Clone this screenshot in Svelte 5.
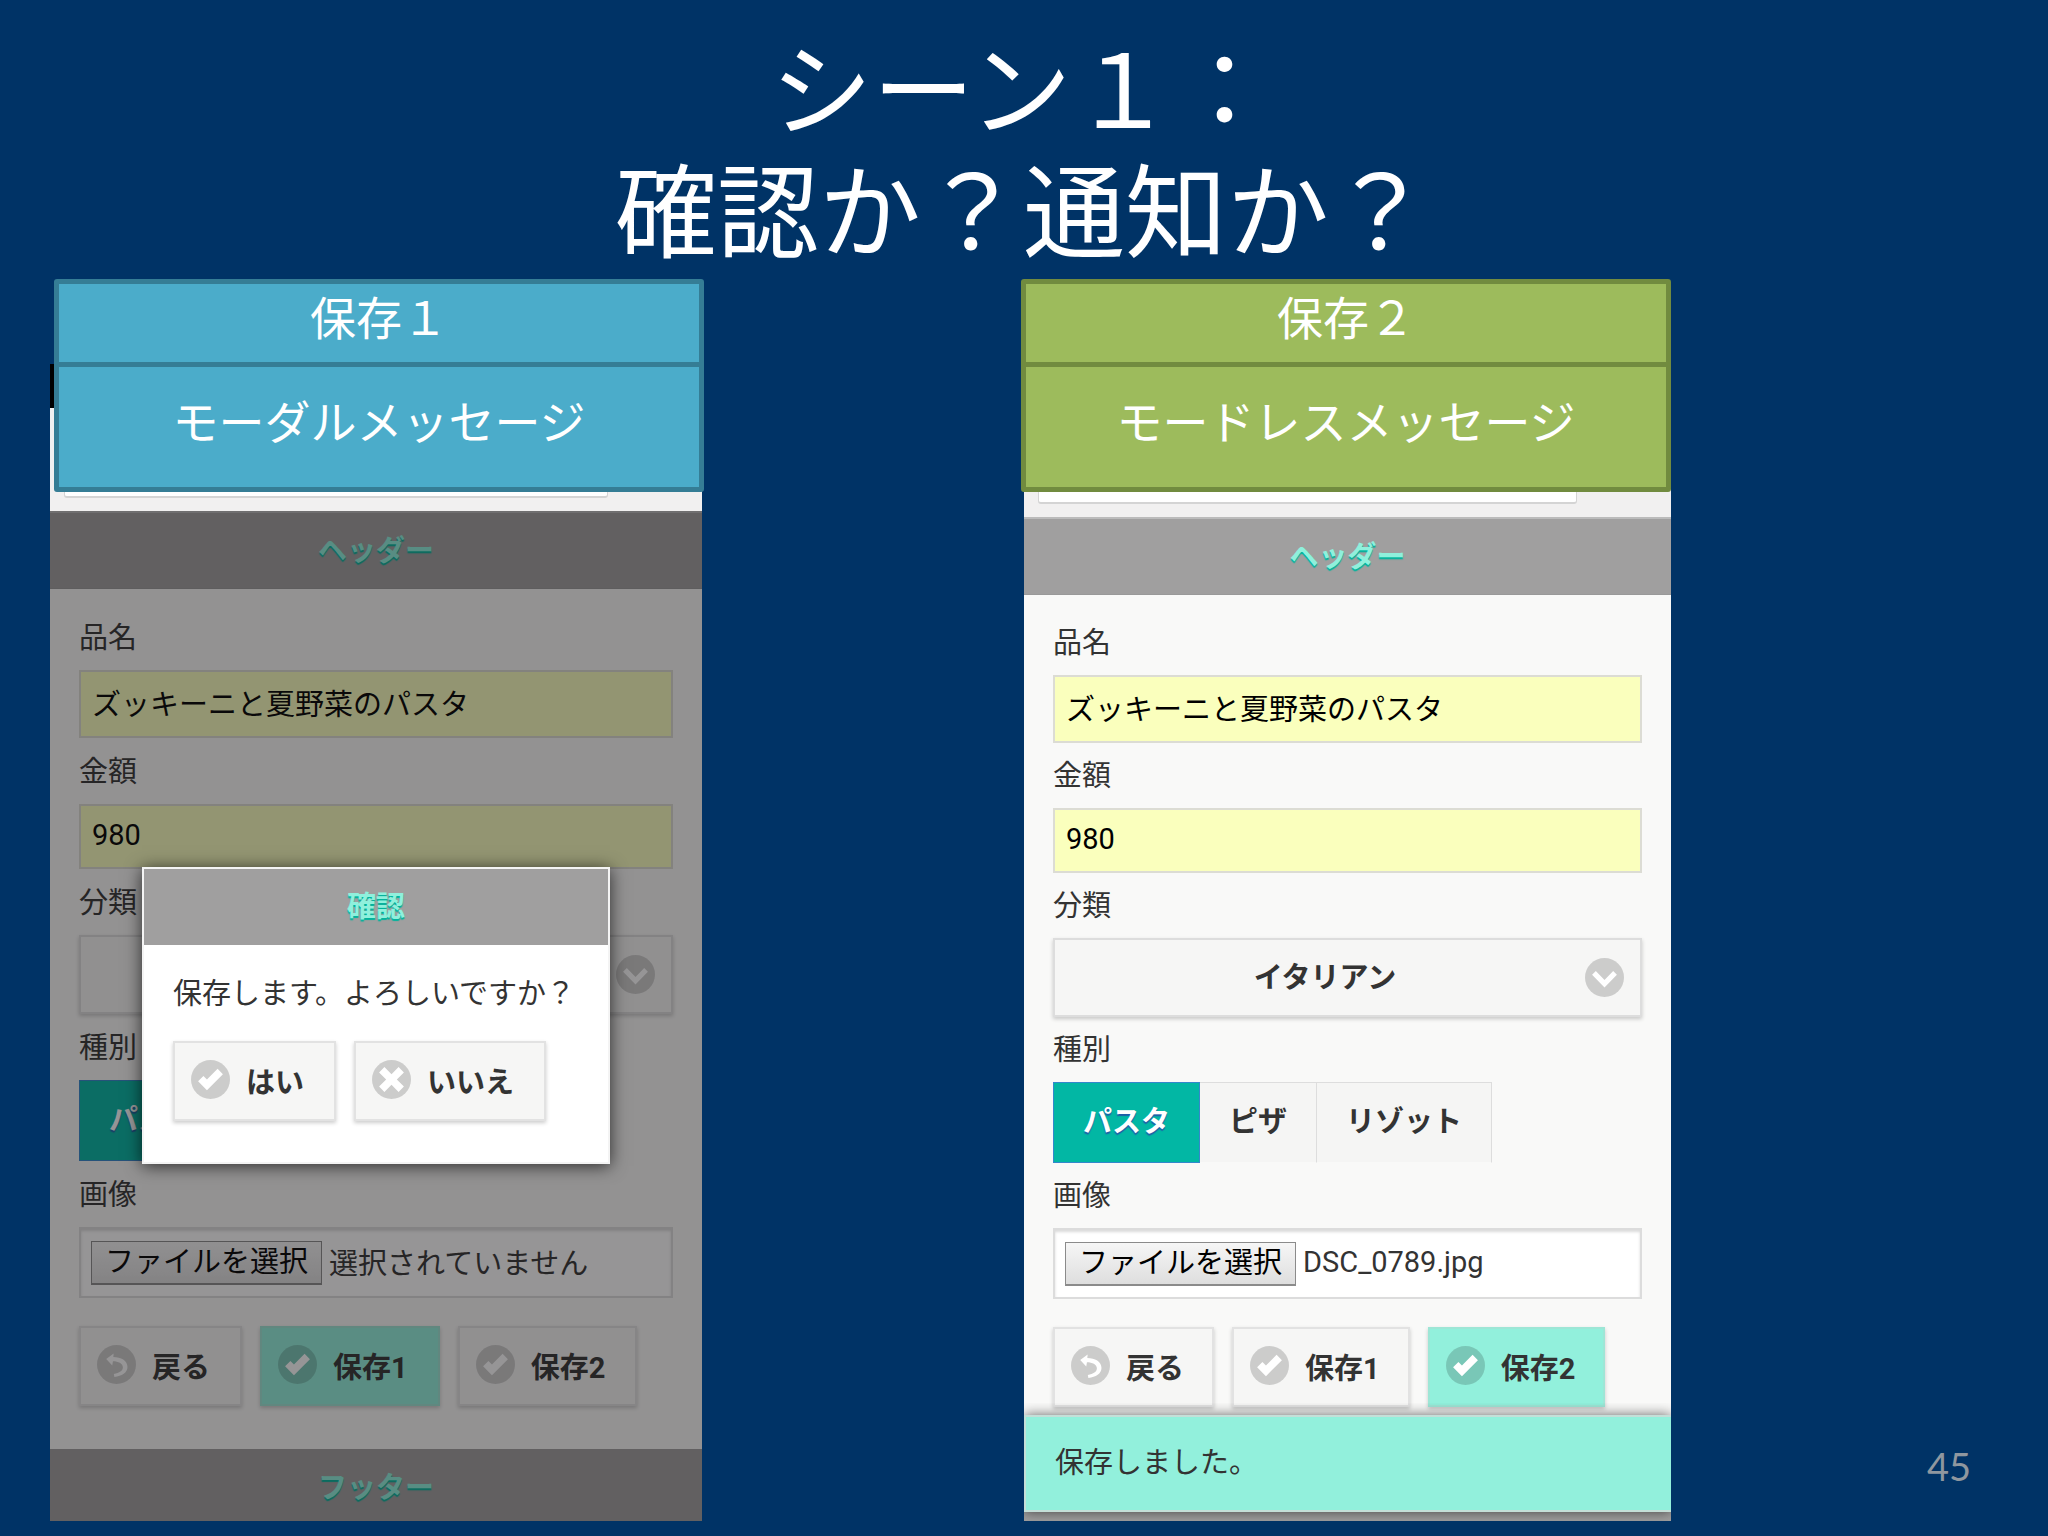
<script>
	const kinds = ['パスタ', 'ピザ', 'リゾット']

	const scenes = [
		{
			id: 'modal',
			title: '保存１',
			subtitle: 'モーダルメッセージ',
			file: '選択されていません',
			active: '保存1'
		},
		{
			id: 'modeless',
			title: '保存２',
			subtitle: 'モードレスメッセージ',
			file: 'DSC_0789.jpg',
			active: '保存2'
		}
	]

	const actions = [
		{ icon: 'back', text: '戻る' },
		{ icon: 'check', text: '保存1' },
		{ icon: 'check', text: '保存2' }
	]

	const pickFile = (id) => {
		document.getElementById(`${id}-image`).click()
	}
</script>

{#snippet icon(name)}
	<svg class="icon" viewBox="-4 -4 22 22" aria-hidden="true">
		<circle cx="7" cy="7" r="11" fill="#000" fill-opacity=".17" />
		{#if name === 'check'}
			<polygon fill="#fff" points="14,4 11,1 5,7 3,5 0,8 5,13" />
		{:else if name === 'delete'}
			<polygon fill="#fff" points="14,3 11,0 7,4 3,0 0,3 4,7 0,11 3,14 7,10 11,14 14,11 10,7" />
		{:else if name === 'down'}
			<polygon fill="#fff" points="11.9,3.4 7,8.4 2.1,3.4 0,5.5 7,12.6 14,5.5" />
		{:else}
			<path fill="#fff" d="M1.2,3.9 L5.4,0.8 L5.2,2.8 C9.5,2.8 13.2,4.8 13.2,8.4 C13.2,11.6 10,13.6 5.8,14 L5.5,12.4 C8.6,11.8 10.6,10.6 10.6,8.6 C10.6,6.4 8,5.2 5,5.2 L4.6,7.6 Z" />
		{/if}
	</svg>
{/snippet}

<main>
	<h1>シーン１：<br>確認か？通知か？</h1>

	<div class="scenes">
		{#each scenes as scene}
			<section class="scene {scene.id}">
				<div class="banner">
					<h2>{scene.title}</h2>
					<p>{scene.subtitle}</p>
				</div>

				<div class="phone">
					<div class="browser">
						<input type="url" aria-label="URL">
					</div>

					<div class="app">
						<header>ヘッダー</header>

						<form>
							<label for="{scene.id}-name">品名</label>
							<input class="text name" id="{scene.id}-name" type="text" value="ズッキーニと夏野菜のパスタ">

							<label for="{scene.id}-price">金額</label>
							<input class="text price" id="{scene.id}-price" type="text" value="980">

							<label for="{scene.id}-category">分類</label>
							<div class="select">
								<select id="{scene.id}-category">
									<option>イタリアン</option>
								</select>
								{@render icon('down')}
							</div>

							<fieldset>
								<legend>種別</legend>
								<div class="kinds">
									{#each kinds as kind, i}
										<label>
											<input type="radio" name="{scene.id}-kind" checked={i === 0}>
											<span>{kind}</span>
										</label>
									{/each}
								</div>
							</fieldset>

							<label for="{scene.id}-image">画像</label>
							<div class="file">
								<input id="{scene.id}-image" type="file">
								<button type="button" onclick={() => pickFile(scene.id)}>ファイルを選択</button>
								<span>{scene.file}</span>
							</div>

							<div class="actions">
								{#each actions as action}
									<button type="button" class="btn" class:active={action.text === scene.active}>
										{@render icon(action.icon)}
										{action.text}
									</button>
								{/each}
							</div>
						</form>

						<footer>フッター</footer>

						{#if scene.id === 'modal'}
							<div class="overlay">
								<div class="dialog" role="dialog" aria-labelledby="dialog-title">
									<h3 id="dialog-title">確認</h3>
									<p>保存します。よろしいですか？</p>
									<div class="dialog-actions">
										<button type="button" class="btn">{@render icon('check')}はい</button>
										<button type="button" class="btn">{@render icon('delete')}いいえ</button>
									</div>
								</div>
							</div>
						{:else}
							<div class="toast" role="status">保存しました。</div>
						{/if}
					</div>
				</div>
			</section>
		{/each}

		<div class="page-number">45</div>
	</div>
</main>

<style>
	:global(body) {
		margin: 0;
		background-color: #003366;
	}

	main {
		box-sizing: border-box;
		min-height: 100vh;
		padding: 32px 0 15px 50px;
		color: #fff;
		font-family: Roboto, "Noto Sans CJK JP", sans-serif;
		font-size: 29px;
	}

	main :global(*) {
		box-sizing: border-box;
	}

	h1 {
		margin: 0 52px 3px 0;
		font-size: 102px;
		font-weight: 400;
		line-height: 122px;
		text-align: center;
	}

	.scenes {
		display: grid;
		grid-template-columns: 652fr 322fr 647fr 377fr;
	}

	.scene {
		display: flex;
		flex-direction: column;
	}

	.modeless {
		grid-column: 3;
	}

	/* banners */
	.banner {
		position: relative;
		z-index: 1;
		margin: 0 -2px 0 4px;
		border: 5px solid #357d95;
		border-radius: 3px;
		background-color: #4bacca;
		font-family: "Noto Sans CJK JP", sans-serif;
		text-align: center;
	}

	.modeless .banner {
		margin: 0 0 0 -3px;
		border-color: #718b3f;
		background-color: #9dbb5c;
	}

	.banner h2,
	.banner p {
		margin: 0;
		padding-bottom: 15px;
		font-size: 46px;
		font-weight: 400;
	}

	.banner h2 {
		line-height: 63px;
		border-bottom: 5px solid #357d95;
	}

	.modeless h2 {
		border-color: #718b3f;
	}

	.banner p {
		line-height: 105px;
	}

	/* phone */
	.phone {
		flex: 1;
		display: flex;
		flex-direction: column;
		margin-top: -128px;
		color: #333;
	}

	.browser {
		display: flex;
		height: 147px;
		padding: 0 94px 13px 14px;
		border-top: 44px solid #000;
		background-color: #f1f0f0;
	}

	.modeless .browser {
		height: 153px;
	}

	.browser input {
		width: 100%;
		border: 1px solid #d4d4d4;
		border-bottom-width: 2px;
		border-radius: 3px;
		background-color: #fff;
	}

	.app {
		flex: 1;
		position: relative;
		display: flex;
		flex-direction: column;
		background-color: #f9f9f8;
	}

	header,
	footer,
	h3 {
		margin: 0;
		background-color: #a09f9f;
		color: #8ff0dc;
		font-size: 29px;
		font-weight: 700;
		text-align: center;
		text-shadow: 0 2px 1px #00b39c;
	}

	header {
		padding-top: 2px;
		line-height: 73px;
		border-top: 2px solid #bbb;
		border-bottom: 1px solid #999;
	}

	footer {
		height: 72px;
		line-height: 78px;
	}

	form {
		flex: 1;
		padding: 15px 29px 42px;
	}

	label,
	legend {
		display: block;
		padding: 2px 0 0;
		line-height: 64px;
	}

	.modeless label,
	.modeless legend {
		line-height: 63px;
	}

	fieldset {
		margin: 0;
		padding: 0;
		border: 0;
	}

	.text {
		display: block;
		width: 100%;
		padding: 0 11px 4px;
		border: 2px solid #dcdcd4;
		background-color: #faffbd;
		color: #000;
		font: inherit;
	}

	.name {
		height: 68px;
	}

	.price {
		height: 65px;
	}

	.select {
		position: relative;
	}

	.select select {
		display: block;
		appearance: none;
		width: 100%;
		height: 79px;
		padding: 0 63px 0 18px;
		border: 2px solid #ddd;
		border-radius: 0;
		background-color: #f6f6f5;
		box-shadow: 0 2px 4px rgba(0, 0, 0, .2);
		color: #333;
		font: inherit;
		font-weight: 700;
		text-align-last: center;
	}

	.select :global(.icon) {
		position: absolute;
		top: 20px;
		right: 18px;
		pointer-events: none;
	}

	.icon {
		flex: none;
		width: 39px;
		height: 39px;
	}

	.kinds {
		display: flex;
	}

	.kinds label,
	.modeless .kinds label {
		position: relative;
		padding: 0;
		line-height: 79px;
	}

	.kinds input {
		position: absolute;
		inset: 0;
		margin: 0;
		opacity: 0;
	}

	.kinds span {
		display: block;
		padding: 0 29px;
		border-top: 1px solid #ddd;
		border-right: 1px solid #ddd;
		border-bottom: 1px solid transparent;
		background-color: #f5f5f4;
		background-clip: padding-box;
		font-weight: 700;
	}

	.kinds input:checked + span {
		border: 1px solid #3388cc;
		background-color: #02b7a4;
		color: #fff;
		text-shadow: 0 2px 1px #1f5fa8;
	}

	.file {
		display: flex;
		align-items: center;
		gap: 7px;
		height: 71px;
		padding: 0 10px;
		border: 2px solid #dcdcdc;
		background-color: #fff;
		box-shadow: inset 0 2px 3px rgba(0, 0, 0, .15);
	}

	.file input {
		position: absolute;
		width: 1px;
		height: 1px;
		opacity: 0;
	}

	.file button {
		height: 44px;
		padding: 0 13px;
		border: 1px solid #8b8b8b;
		border-bottom-width: 2px;
		background: linear-gradient(#f6f6f6, #dedede);
		color: #000;
		font: inherit;
		line-height: 40px;
	}

	.file span {
		padding-bottom: 4px;
	}

	.actions,
	.dialog-actions {
		display: flex;
		gap: 18px;
	}

	.actions {
		padding-top: 28px;
	}

	.btn {
		display: flex;
		align-items: center;
		gap: 16px;
		height: 80px;
		padding: 0 30px 3px 16px;
		border: 2px solid #e2e2e2;
		background-color: #f6f6f5;
		box-shadow: 0 2px 4px rgba(0, 0, 0, .2);
		color: #333;
		font: inherit;
		font-weight: 700;
		white-space: nowrap;
	}

	.modeless .btn {
		padding-right: 28px;
	}

	.active {
		border-color: #9ee6d6;
		background-color: #92f0dc;
	}

	/* messages */
	.overlay {
		position: absolute;
		inset: 0;
		display: flex;
		justify-content: center;
		align-items: flex-start;
		padding-top: 356px;
		background-color: rgba(22, 19, 22, .45);
	}

	.dialog {
		border: 2px solid #f4f4f4;
		background-color: #fff;
		box-shadow: 0 2px 16px rgba(0, 0, 0, .7);
	}

	.dialog h3 {
		line-height: 76px;
	}

	.dialog p {
		margin: 0;
		padding: 16px 33px 14px 29px;
		line-height: 66px;
	}

	.dialog-actions {
		padding: 0 29px 41px;
	}

	.toast {
		position: absolute;
		right: 0;
		bottom: 9px;
		left: 0;
		padding: 0 29px;
		border: 2px solid #c4dfd8;
		border-width: 2px 0 2px 2px;
		background-color: #92f0dc;
		box-shadow: 0 0 12px rgba(0, 0, 0, .6);
		clip-path: inset(-12px 0 -9px 0);
		line-height: 93px;
	}

	.page-number {
		grid-column: 4;
		place-self: end;
		padding: 0 77px 31px 0;
		color: #8f979f;
		font-family: Lato, sans-serif;
		font-size: 38px;
		font-weight: 400;
		line-height: 48px;
	}
</style>
